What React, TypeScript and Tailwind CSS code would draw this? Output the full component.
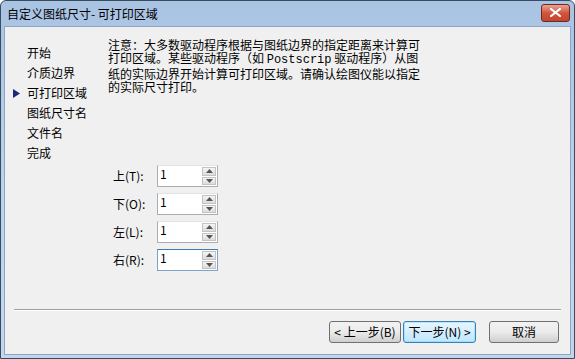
import React from "react";

const font = { fontFamily: '"Noto Sans CJK SC", "Noto Sans", sans-serif' };

function Spin({ label, focused }: { label: React.ReactNode; focused?: boolean }) {
  return (
    <div className="flex items-center h-[22px]">
      <div className="w-[49px] text-[12px] leading-[14px] text-black pl-[5px]">{label}</div>
      <div
        className={`flex w-[61px] h-[22px] bg-white border ${
          focused ? "border-[#7da2ce] border-t-[#3d7bad]" : "border-[#abadb3] border-t-[#e3e3e3]"
        }`}
      >
        <div className="flex-1 text-[12px] leading-[14px] pl-[2px] pt-[1px] text-black">1</div>
        <div className="w-[15px] flex flex-col gap-[1px] py-[1px] pr-[1px]">
          <div className="flex-1 flex items-center justify-center border border-[#c3c3c3] bg-gradient-to-b from-[#f5f5f5] to-[#dcdcdc]">
            <svg width="7" height="4" viewBox="0 0 7 4">
              <path d="M0 4 L3.5 0 L7 4 Z" fill="#555" />
            </svg>
          </div>
          <div className="flex-1 flex items-center justify-center border border-[#c3c3c3] bg-gradient-to-b from-[#f5f5f5] to-[#dcdcdc]">
            <svg width="7" height="4" viewBox="0 0 7 4">
              <path d="M0 0 L7 0 L3.5 4 Z" fill="#555" />
            </svg>
          </div>
        </div>
      </div>
    </div>
  );
}

function Btn({ children, focused, w }: { children: React.ReactNode; focused?: boolean; w: string }) {
  return (
    <div
      className={`h-[22px] ${w} flex items-center justify-center text-[12px] text-black rounded-[3px] border ${
        focused
          ? "border-[#3c7fb1] bg-gradient-to-b from-[#eaf6fd] to-[#bee6fd] shadow-[inset_0_0_0_1px_#48d1ff55]"
          : "border-[#707070] bg-gradient-to-b from-[#f2f2f2] via-[#ebebeb] to-[#cfcfcf]"
      }`}
    >
      {children}
    </div>
  );
}

export default function App() {
  const nav = ["开始", "介质边界", "可打印区域", "图纸尺寸名", "文件名", "完成"];
  return (
    <div
      style={font}
      className="w-[575px] h-[359px] flex flex-col border border-[#3a4b5e] bg-gradient-to-b from-[#a9c3e3] via-[#bcd2ee] to-[#c2d7ee] rounded-t-[6px] overflow-hidden"
    >
      <div className="h-[25px] flex items-center justify-between pl-[6px] pr-[4px]">
        <div className="text-[12px] text-black leading-none">自定义图纸尺寸- 可打印区域</div>
        <div className="w-[29px] h-[18px] -mt-[2px] rounded-[3px] border border-[#6d2a22] bg-gradient-to-b from-[#e8a493] via-[#d0553c] to-[#c4452d] flex items-center justify-center">
          <svg width="11" height="9" viewBox="0 0 11 9">
            <path d="M1 1 L10 8 M10 1 L1 8" stroke="white" strokeWidth="2.2" strokeLinecap="square" />
          </svg>
        </div>
      </div>
      <div className="flex-1 mx-[3px] mb-[3px] bg-[#f0f0f0] border border-[#8ea6c4] flex flex-col">
        <div className="flex flex-1">
          <div className="w-[103px] pt-[16px]">
            {nav.map((n) => (
              <div key={n} className="h-[20px] flex items-center text-[12px] text-black">
                <div className="w-[22px] flex justify-center pl-[1px]">
                  {n === "可打印区域" && (
                    <svg width="7" height="9" viewBox="0 0 7 9">
                      <path d="M0 0 L7 4.5 L0 9 Z" fill="#1a2a78" />
                    </svg>
                  )}
                </div>
                <span>{n}</span>
              </div>
            ))}
          </div>
          <div className="flex-1 flex flex-col pt-[11px]">
            <div className="text-[12px] leading-[13px] text-black whitespace-nowrap">
              <div>注意：大多数驱动程序根据与图纸边界的指定距离来计算可</div>
              <div>
                打印区域。某些驱动程序（如 <span style={{ fontFamily: '"Liberation Mono", monospace' }}>Postscrip</span> 驱动程序）从图
              </div>
              <div>纸的实际边界开始计算可打印区域。请确认绘图仪能以指定</div>
              <div>的实际尺寸打印。</div>
            </div>
            <div className="mt-[72px] flex flex-col gap-[6px]">
              <Spin label="上(T):" />
              <Spin label="下(O):" />
              <Spin label="左(L):" />
              <Spin label="右(R):" focused />
            </div>
          </div>
        </div>
        <div className="mx-[9px] h-[2px] border-t border-[#a0a0a0] border-b border-b-white" />
        <div className="h-[43px] flex items-center justify-end pr-[11px] pb-[2px]">
          <Btn w="w-[72px]">&lt; 上一步(B)</Btn>
          <div className="w-[2px]" />
          <Btn w="w-[73px]" focused>下一步(N) &gt;</Btn>
          <div className="w-[13px]" />
          <Btn w="w-[70px]">取消</Btn>
        </div>
      </div>
    </div>
  );
}
